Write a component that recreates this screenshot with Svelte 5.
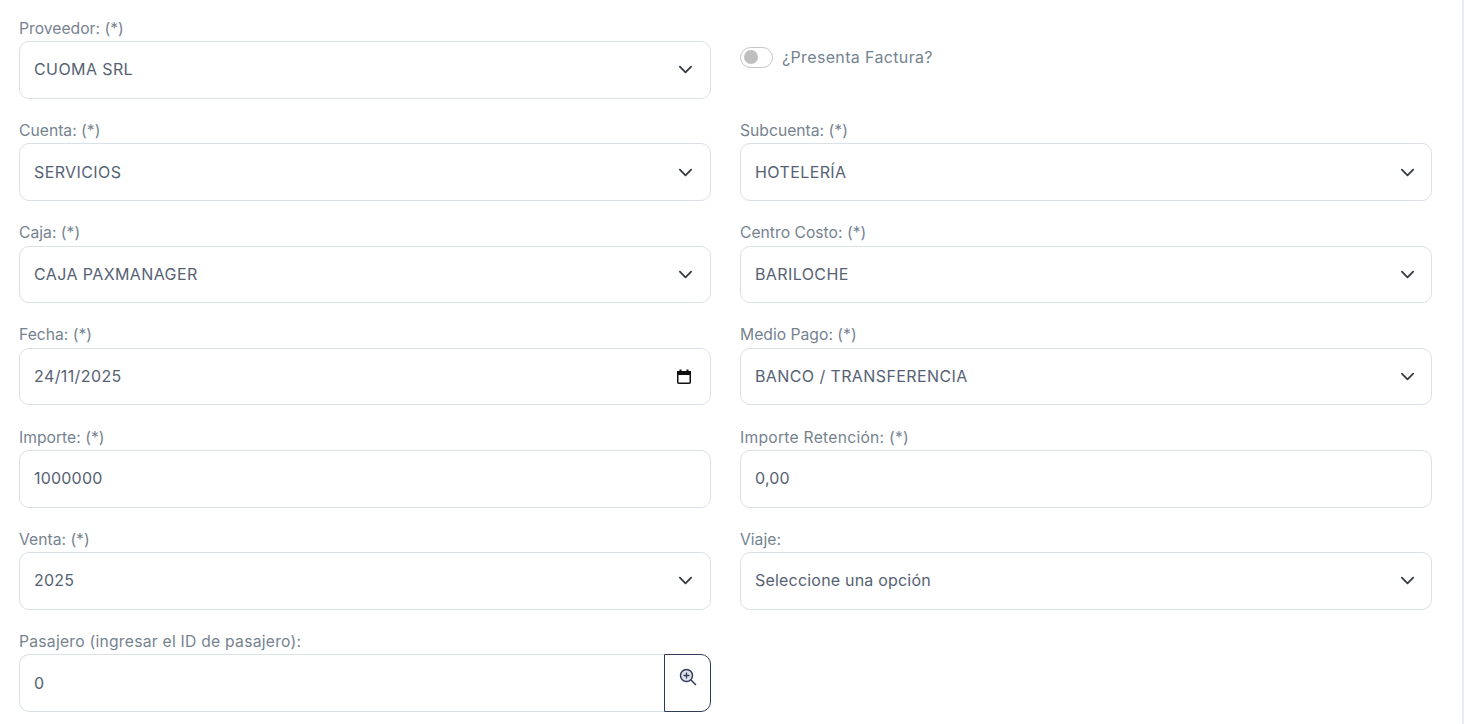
<script>
  const rows = [
    [{ label: 'Proveedor: (*)', value: 'CUOMA SRL', kind: 'select', caps: true }, { kind: 'toggle', label: '¿Presenta Factura?' }],
    [{ label: 'Cuenta: (*)', value: 'SERVICIOS', kind: 'select', caps: true }, { label: 'Subcuenta: (*)', value: 'HOTELERÍA', kind: 'select', caps: true }],
    [{ label: 'Caja: (*)', value: 'CAJA PAXMANAGER', kind: 'select', caps: true }, { label: 'Centro Costo: (*)', value: 'BARILOCHE', kind: 'select', caps: true }],
    [{ label: 'Fecha: (*)', value: '24/11/2025', kind: 'date', caps: true }, { label: 'Medio Pago: (*)', value: 'BANCO / TRANSFERENCIA', kind: 'select', caps: true }],
    [{ label: 'Importe: (*)', value: '1000000', kind: 'input' }, { label: 'Importe Retención: (*)', value: '0,00', kind: 'input', wide: true }],
    [{ label: 'Venta: (*)', value: '2025', kind: 'select' }, { label: 'Viaje:', value: 'Seleccione una opción', kind: 'select' }],
    [{ label: 'Pasajero (ingresar el ID de pasajero):', value: '0', kind: 'search', wide: true }, { kind: 'empty' }]
  ];
</script>

<main class="page">
  <div class="grid">
    {#each rows as row}
      {#each row as f}
        {#if f.kind === 'toggle'}
          <div class="toggle-row">
            <span class="switch"><span class="knob"></span></span>
            <span class="toggle-label">{f.label}</span>
          </div>
        {:else if f.kind === 'empty'}
          <div></div>
        {:else}
          <div class="field">
            <div class="label" class:wide={f.wide}>{f.label}</div>
            {#if f.kind === 'search'}
              <div class="group">
                <div class="control joined">{f.value}</div>
                <button class="search" aria-label="Buscar">
                  <svg width="18" height="18" viewBox="0 0 18 18" fill="none">
                    <circle cx="7.5" cy="7.5" r="6" fill="#dfe3ee" stroke="#2f3b59" stroke-width="1.5"/>
                    <path d="M12 12l5 5" stroke="#2f3b59" stroke-width="1.5"/>
                    <path d="M4.5 7.5h6M7.5 4.5v6" stroke="#2f3b59" stroke-width="1.3"/>
                  </svg>
                </button>
              </div>
            {:else}
              <div class="control">
                <span class="value" class:caps={f.caps}>{f.value}</span>
                {#if f.kind === 'select'}
                  <svg class="chev" width="15" height="15" viewBox="0 0 16 16" fill="none">
                    <path d="M2 5l6 6 6-6" stroke="#343a40" stroke-width="1.9" stroke-linecap="round" stroke-linejoin="round"/>
                  </svg>
                {:else if f.kind === 'date'}
                  <svg class="cal" width="16" height="16" viewBox="0 0 16 16" fill="none">
                    <rect x="1.75" y="2.75" width="12.5" height="11.5" rx="1" stroke="#111" stroke-width="1.5"/>
                    <rect x="1" y="2" width="14" height="4" fill="#111"/>
                    <rect x="3.5" y="0.5" width="2" height="2.5" fill="#111"/>
                    <rect x="10.5" y="0.5" width="2" height="2.5" fill="#111"/>
                  </svg>
                {/if}
              </div>
            {/if}
          </div>
        {/if}
      {/each}
    {/each}
  </div>
</main>

<style>
  :global(body) {
    margin: 0;
    background: #fff;
    overflow: hidden;
  }
  .page {
    box-sizing: border-box;
    width: 1464px;
    height: 724px;
    padding: 17.2px 32px 0 19px;
    border-right: 2px solid #eaeaf4;
    font-family: "Inter", "Liberation Sans", sans-serif;
    font-size: 15.7px;
    overflow: hidden;
  }
  .grid {
    display: grid;
    grid-template-columns: 692px 692px;
    column-gap: 29px;
    row-gap: 20.6px;
  }
  .label {
    color: #76838f;
    line-height: 23px;
    height: 24.4px;
    margin-top: -0.4px;
    white-space: nowrap;
  }
  .wide {
    letter-spacing: 0.24px;
  }
  .control {
    box-sizing: border-box;
    height: 57.6px;
    border: 1px solid #dbe0e6;
    border-radius: 10px;
    padding: 0 17px 0 14px;
    display: flex;
    align-items: center;
    justify-content: space-between;
    color: #566273;
    background: #fff;
    font-size: 16px;
  }
  .field:nth-child(even) .control {
    padding-right: 16px;
  }
  .value {
    letter-spacing: 0.2px;
    position: relative;
    top: -0.5px;
  }
  .caps {
    letter-spacing: 0.4px;
  }
  .chev {
    flex: none;
  }
  .cal {
    flex: none;
    margin-right: 1px;
  }
  .toggle-row {
    display: flex;
    align-items: center;
    gap: 9px;
    height: 34px;
    margin-top: 23px;
  }
  .switch {
    box-sizing: border-box;
    width: 33px;
    height: 21px;
    border: 1px solid #c4c4c4;
    border-radius: 11px;
    display: flex;
    align-items: center;
    padding-left: 3px;
  }
  .knob {
    width: 14px;
    height: 14px;
    border-radius: 50%;
    background: #bfbfbf;
  }
  .toggle-label {
    color: #76838f;
    font-size: 16px;
    letter-spacing: 0.35px;
  }
  .group {
    display: flex;
  }
  .joined {
    flex: 1;
    border-radius: 10px 0 0 10px;
    border-right: none;
  }
  .search {
    box-sizing: border-box;
    width: 47px;
    height: 57.6px;
    background: #fff;
    border: 1px solid #2f3b59;
    border-radius: 0 10px 10px 0;
    padding: 13px 0 0 1px;
    display: flex;
    justify-content: center;
    align-items: flex-start;
  }
</style>
